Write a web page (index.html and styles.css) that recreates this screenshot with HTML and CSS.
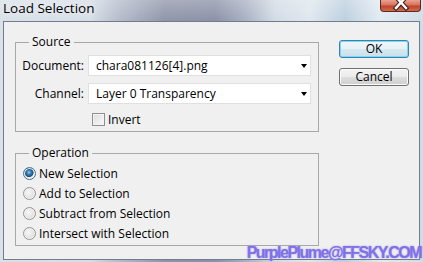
FILE: index.html
```html
<!DOCTYPE html>
<html>
<head>
<meta charset="utf-8">
<title>Load Selection</title>
<link rel="stylesheet" href="styles.css">
</head>
<body>
<div class="window">
  <div class="titlebar">
    <span class="title">Load Selection</span>
    <span class="close">
      <svg width="41" height="12" viewBox="0 0 41 12">
        <path d="M16 -3 L26 8 M26 -3 L16 8" stroke="#3a1a14" stroke-width="4.5" stroke-linecap="square"/>
        <path d="M16 -3 L26 8 M26 -3 L16 8" stroke="#ffffff" stroke-width="2.5" stroke-linecap="square"/>
      </svg>
    </span>
  </div>
  <div class="client">
    <div class="groups">
      <fieldset class="group source">
        <legend>Source</legend>
        <div class="row">
          <span class="label">Document:</span>
          <div class="select"><span>chara081126[4].png</span><span class="arrow"></span></div>
        </div>
        <div class="row">
          <span class="label">Channel:</span>
          <div class="select"><span>Layer 0 Transparency</span><span class="arrow"></span></div>
        </div>
        <div class="check-row"><span class="checkbox"></span><span>Invert</span></div>
      </fieldset>
      <fieldset class="group operation">
        <legend>Operation</legend>
        <div class="radio-row"><span class="radio checked"></span><span>New Selection</span></div>
        <div class="radio-row"><span class="radio"></span><span>Add to Selection</span></div>
        <div class="radio-row"><span class="radio"></span><span>Subtract from Selection</span></div>
        <div class="radio-row"><span class="radio"></span><span>Intersect with Selection</span></div>
      </fieldset>
    </div>
    <div class="buttons">
      <button class="btn default">OK</button>
      <button class="btn">Cancel</button>
    </div>
    <div class="watermark">PurplePlume@FFSKY.COM</div>
  </div>
</div>
</body>
</html>
```
FILE: styles.css
```css
* { box-sizing: border-box; }
html, body { margin: 0; padding: 0; }
body {
  width: 423px;
  height: 262px;
  overflow: hidden;
  font-family: "Open Sans", "Noto Sans", sans-serif;
  font-size: 12px;
  color: #000;
  background:
    linear-gradient(180deg, rgba(255,255,255,0.25) 0, rgba(255,255,255,0) 22px),
    linear-gradient(90deg, #d9e0e8 0, #d6dde6 90px, #b3bac9 120px, #8e93a8 165px, #8a90a6 215px, #a7afc1 245px, #d2dbe5 275px, #dfe7ee 310px, #bccfdf 345px, #e2eaf1 380px, #cfdce8 423px);
}
.window {
  display: flex;
  flex-direction: column;
  height: 262px;
  padding: 0 3px 2px 3px;
}
.titlebar {
  height: 21px;
  display: flex;
  justify-content: space-between;
  align-items: flex-start;
}
.title {
  font-size: 13.5px;
  line-height: 18px;
  padding-left: 0;
  margin-top: -1px;
  color: #000;
  text-shadow: 0 0 6px rgba(255,255,255,0.9);
}
.close {
  width: 41px;
  height: 12px;
  margin-right: -1px;
  border: 1px solid #5e2b22;
  border-top: none;
  border-radius: 0 0 4px 4px;
  background: linear-gradient(180deg, #e9a392 0, #d8725c 45%, #c0432c 55%, #cf6a4e 100%);
  overflow: hidden;
  display: block;
}
.close svg { display: block; margin-left: -1px; }
.client {
  flex: 1;
  display: flex;
  position: relative;
  background: #f0f0f0;
  border: 1px solid #6f7e8c;
}
.groups {
  padding: 12px 0 0 11px;
}
.group {
  margin: 0;
  width: 304px;
  border: 1px solid #a8a8a8;
  min-inline-size: 0;
}
.group legend {
  margin-left: 13px;
  padding: 0 3px;
  line-height: 16px;
  font-size: 12px;
}
.source {
  padding: 5px 7px 4px 0;
}
.operation {
  margin-top: 13px;
  padding: 2px 0 2px 0;
}
.row {
  display: flex;
  align-items: center;
  height: 21px;
}
.row + .row { margin-top: 7px; }
.label {
  width: 68px;
  margin-right: 4px;
  text-align: right;
}
.select {
  width: 223px;
  height: 21px;
  background: #fff;
  border: 1px solid #e0e0e0;
  padding: 0 3px 0 7px;
  display: flex;
  align-items: center;
  justify-content: space-between;
}
.arrow {
  width: 0;
  height: 0;
  border-left: 3.5px solid transparent;
  border-right: 3.5px solid transparent;
  border-top: 4px solid #000;
}
.check-row {
  display: flex;
  align-items: center;
  gap: 3px;
  height: 15px;
  margin-top: 8px;
  padding-left: 76px;
}
.checkbox {
  width: 13px;
  height: 13px;
  border: 1px solid #8e8f8f;
  background: linear-gradient(135deg, #dcdcdc 0, #f4f4f4 80%);
  box-shadow: inset 0 0 0 1px #f4f4f4;
}
.radio-row {
  display: flex;
  align-items: center;
  gap: 3px;
  height: 20px;
  padding-left: 7px;
}
.radio {
  width: 13px;
  height: 13px;
  border-radius: 50%;
  border: 1px solid #949494;
  background: radial-gradient(circle at 40% 40%, #f6f6f6 0, #dedede 70%, #cfcfcf 100%);
  box-shadow: inset 0 0 0 1px #f3f3f3;
}
.radio.checked {
  border-color: #4d6f8c;
  background: radial-gradient(circle at 45% 40%, #8fc4ea 0, #2a6fa6 30%, #1b4f7c 48%, #e8eef3 56%, #d8dde2 100%);
}
.buttons {
  display: flex;
  flex-direction: column;
  gap: 10px;
  padding-top: 18px;
  margin-left: 20px;
}
.btn {
  width: 70px;
  height: 18px;
  padding: 0;
  font-family: "Open Sans", "Noto Sans", sans-serif;
  font-size: 12px;
  line-height: 14px;
  color: #000;
  border: 1px solid #707070;
  border-radius: 3px;
  background: linear-gradient(180deg, #f3f3f3 0, #ebebeb 50%, #dddddd 51%, #cfcfcf 100%);
  box-shadow: inset 0 0 0 1px #fbfbfb;
}
.btn.default {
  border-color: #3c7fb1;
  box-shadow: inset 0 0 0 1px #7cd8f4;
  background: linear-gradient(180deg, #f0f7fa 0, #e6f1f6 50%, #d6e9f1 51%, #c8e0eb 100%);
}
.watermark {
  position: absolute;
  right: -2px;
  bottom: -2px;
  font-family: "Liberation Sans", Arial, sans-serif;
  font-weight: bold;
  font-size: 16px;
  line-height: 16px;
  letter-spacing: -1.5px;
  color: #8072e6;
  text-shadow: 0 0 1px #a59bf0, 0 0 2px rgba(160,150,240,0.6);
}
```
